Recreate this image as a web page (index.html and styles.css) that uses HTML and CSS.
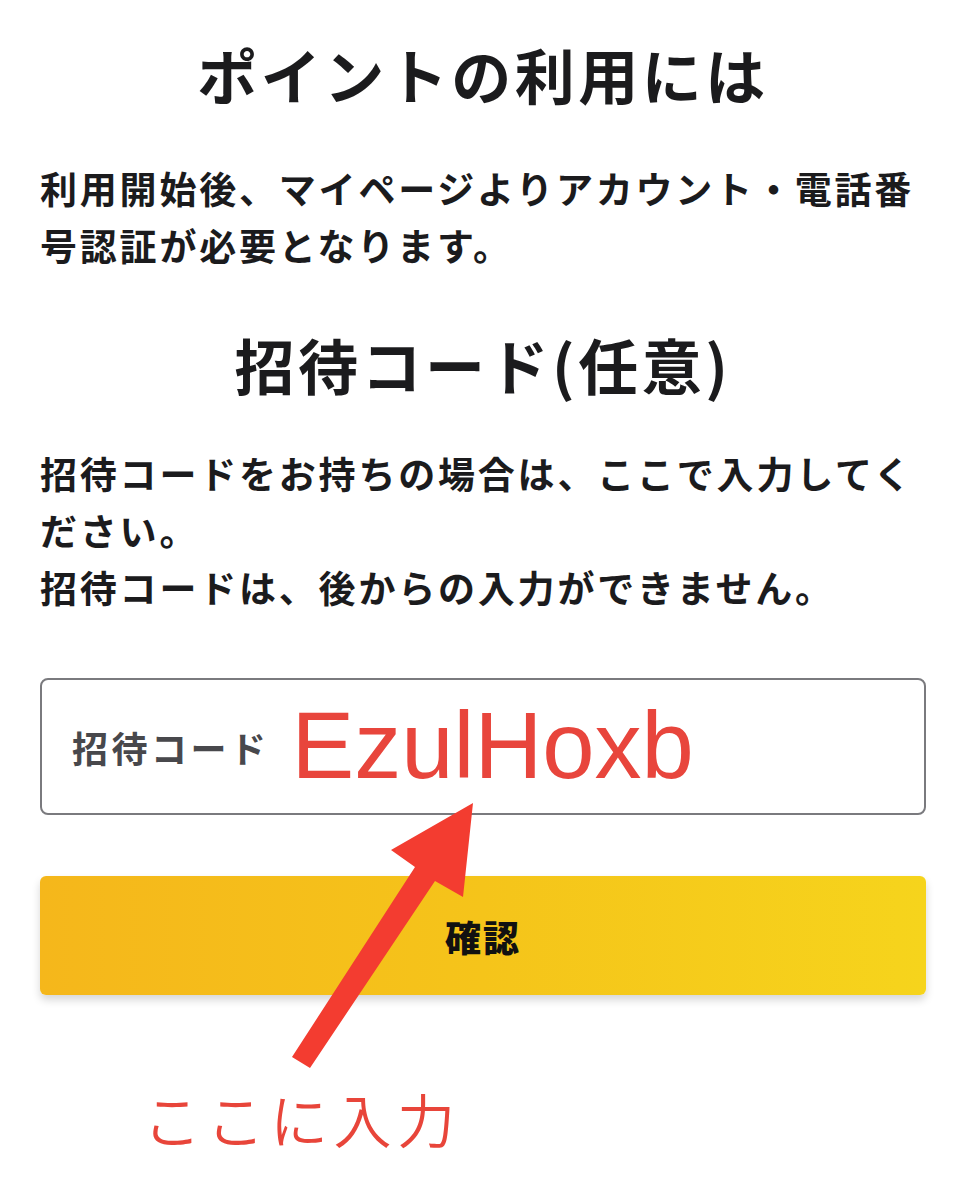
FILE: index.html
```html
<!DOCTYPE html>
<html lang="ja">
<head>
<meta charset="utf-8">
<title>招待コード</title>
<link rel="stylesheet" href="styles.css">
</head>
<body>
<main class="page">
  <h1 class="title">ポイントの利用には</h1>
  <p class="text text-first">利用開始後、マイページよりアカウント・電話番号認証が必要となります。</p>
  <h2 class="title title-second">招待コード(任意)</h2>
  <p class="text text-second">招待コードをお持ちの場合は、ここで入力してください。<br>招待コードは、後からの入力ができません。</p>
  <div class="field">
    <span class="field-label">招待コード</span>
    <span class="field-value">EzulHoxb</span>
  </div>
  <button class="confirm" type="button">確認</button>
  <p class="note">ここに入力</p>
  <svg class="arrow" width="966" height="1200" viewBox="0 0 966 1200" aria-hidden="true">
    <polygon points="473,803 463,897 435,881 310,1068 292,1057 415,867 391,850" fill="#f33c30"/>
  </svg>
</main>
</body>
</html>
```
FILE: styles.css
```css
html, body {
  margin: 0;
  padding: 0;
  background: #ffffff;
}

.page {
  position: relative;
  width: 966px;
  box-sizing: border-box;
  padding: 34px 40px 40px;
  display: flex;
  flex-direction: column;
  font-family: "Noto Sans CJK JP", "Noto Sans", sans-serif;
  color: #1b1b1d;
}

.title {
  margin: 0;
  font-size: 60px;
  font-weight: 700;
  line-height: 80px;
  letter-spacing: 3.5px;
  text-align: center;
}

.title-second {
  margin-top: 50px;
}

.text {
  margin: 0;
  font-size: 37px;
  font-weight: 700;
  line-height: 57px;
  letter-spacing: 2.8px;
}

.text-first {
  margin-top: 46px;
}

.text-second {
  margin-top: 41px;
}

.field {
  margin-top: 62px;
  height: 137px;
  box-sizing: border-box;
  border: 2px solid #7a7a7e;
  border-radius: 8px;
  display: flex;
  align-items: center;
  padding-left: 30px;
  gap: 22px;
}

.field-label {
  font-size: 36px;
  font-weight: 700;
  line-height: 1;
  letter-spacing: 3.5px;
  color: #48484c;
}

.field-value {
  font-family: "Liberation Sans", Arial, sans-serif;
  font-size: 94px;
  font-weight: 400;
  line-height: 1;
  color: #e8453c;
  margin-top: -2px;
}

.confirm {
  margin-top: 61px;
  height: 119px;
  border: none;
  border-radius: 6px;
  background: linear-gradient(90deg, #f5b71b 0%, #f5c41a 50%, #f6d41c 100%);
  box-shadow: 0 5px 9px rgba(0, 0, 0, 0.16);
  font-family: "Noto Sans CJK JP", sans-serif;
  font-size: 36px;
  font-weight: 900;
  color: #111111;
  letter-spacing: 2px;
  padding: 0;
}

.note {
  margin: 88px 0 0 103px;
  font-size: 58px;
  font-weight: 350;
  line-height: 70px;
  letter-spacing: 5.5px;
  color: #e8453a;
}

.arrow {
  position: absolute;
  top: 0;
  left: 0;
  pointer-events: none;
}
```
